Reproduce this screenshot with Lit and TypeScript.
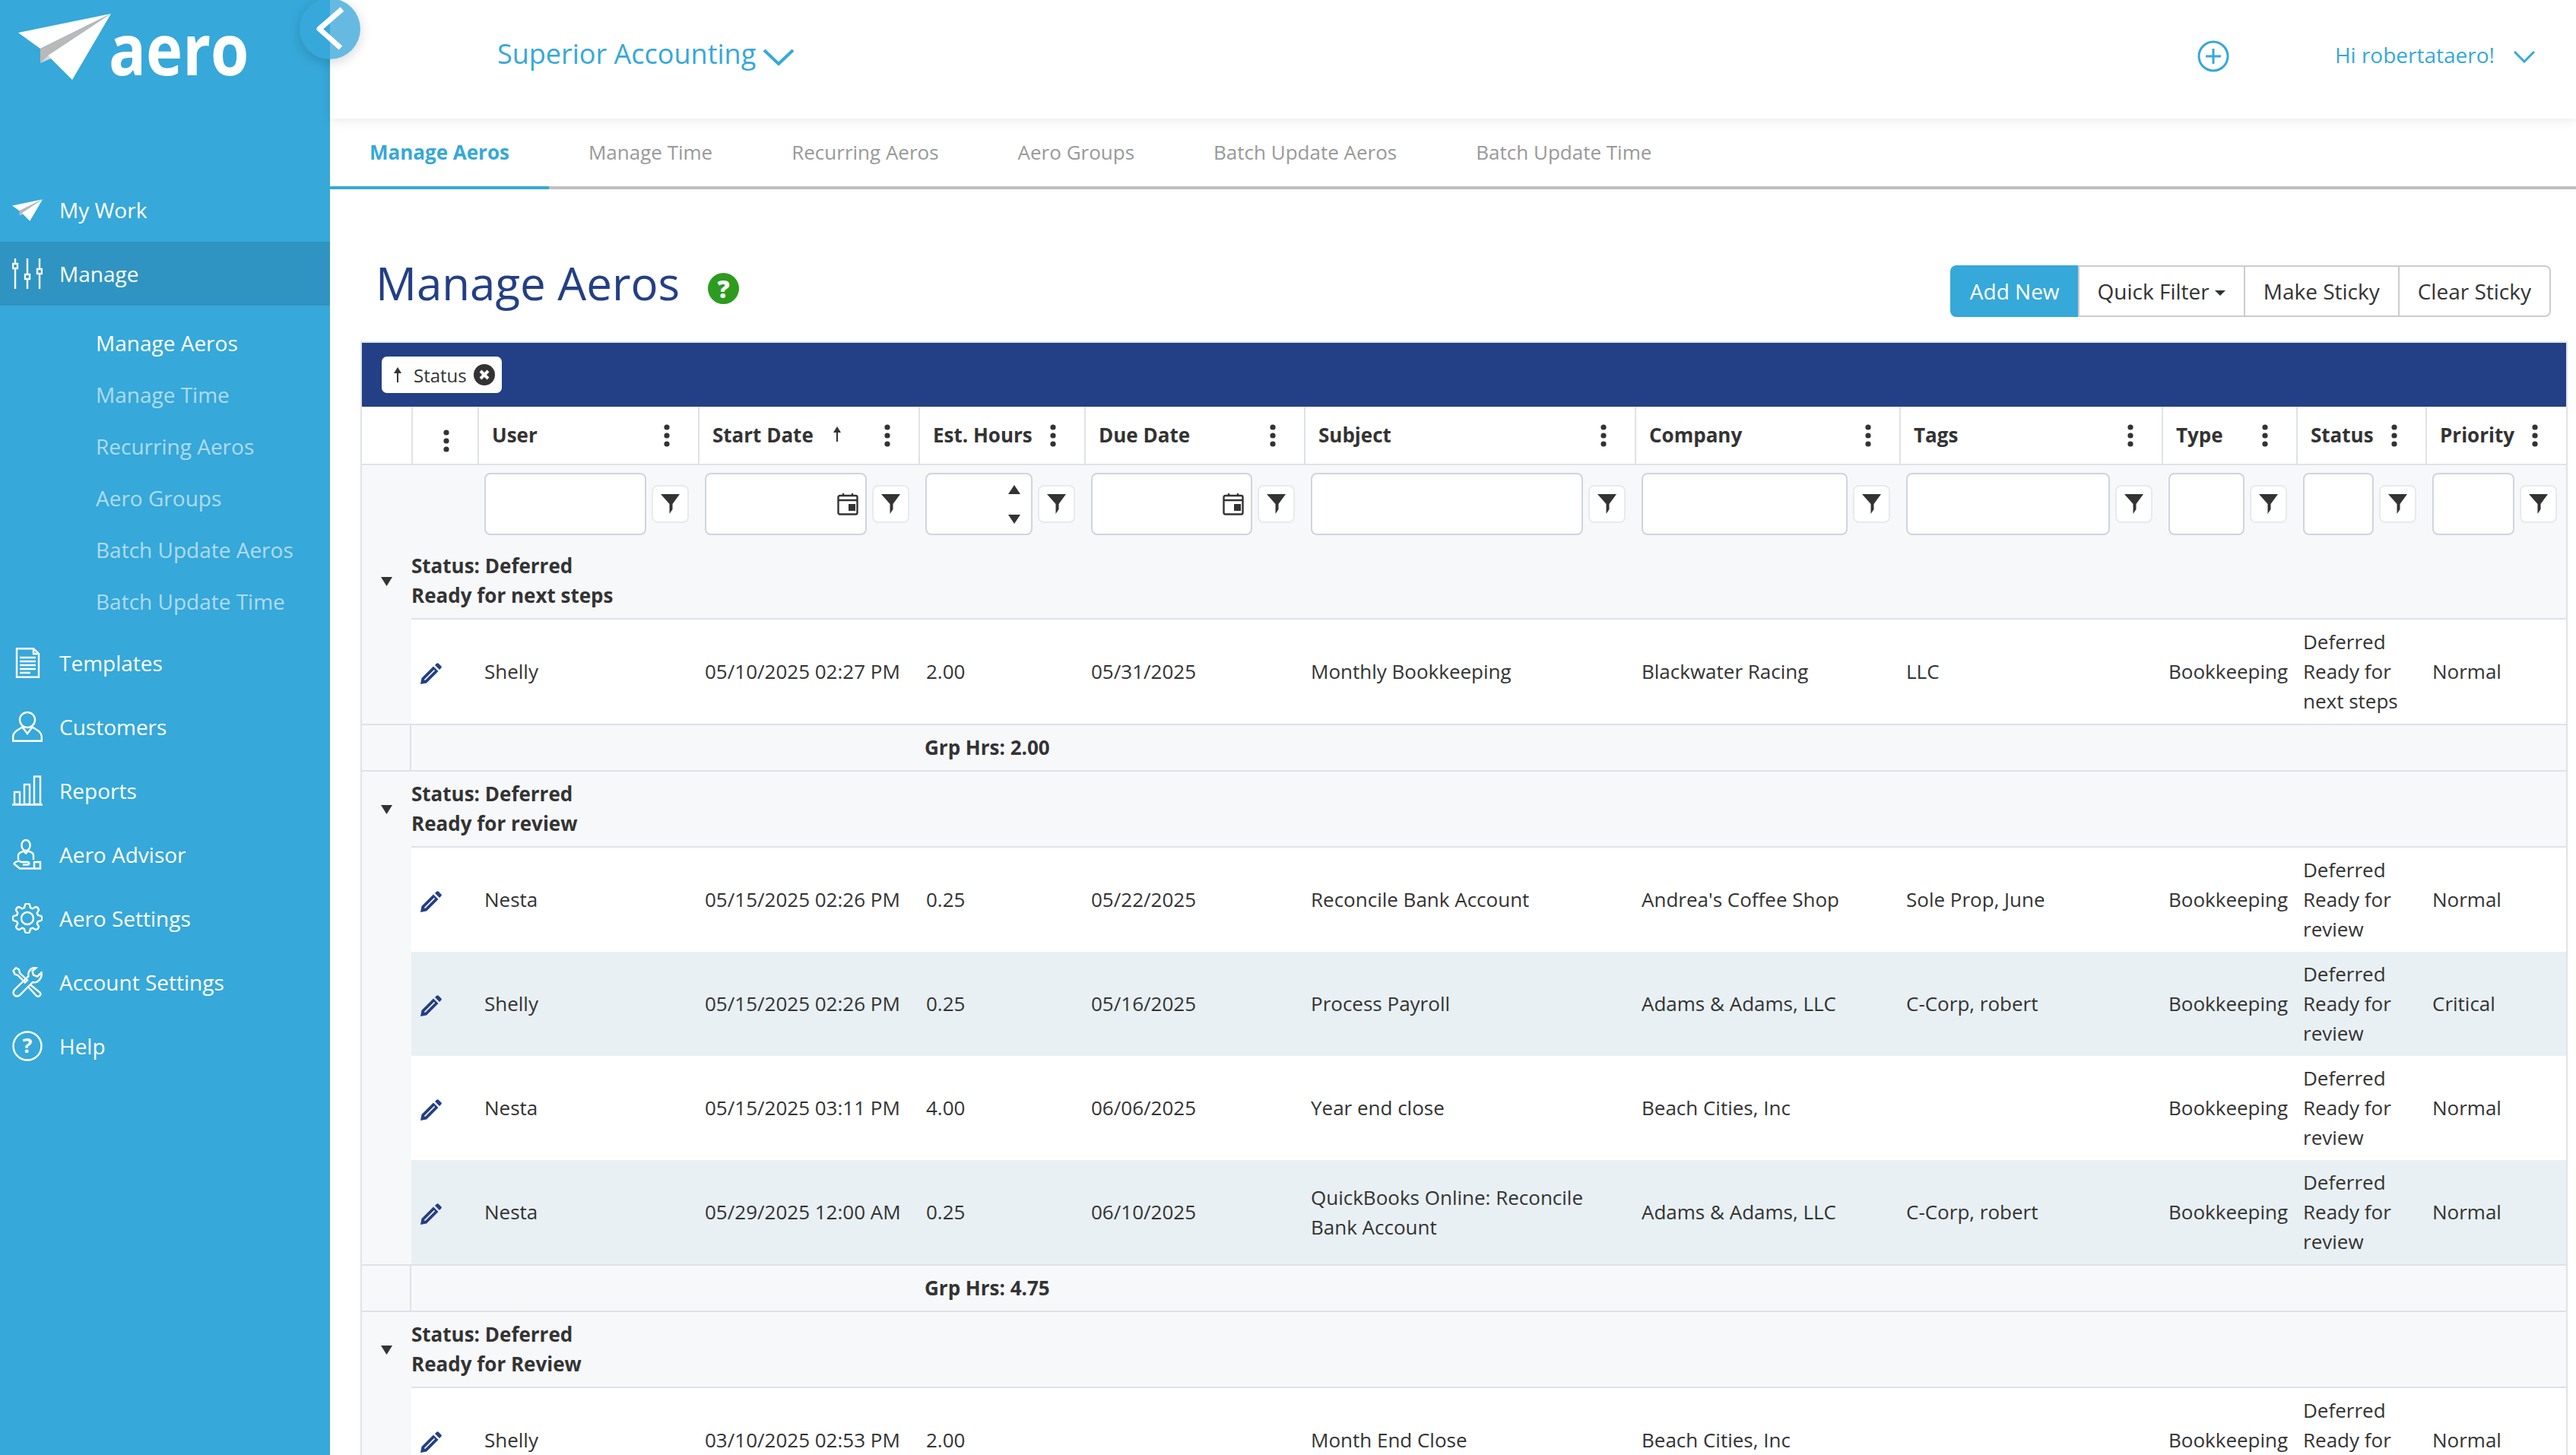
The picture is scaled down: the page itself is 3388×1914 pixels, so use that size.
import { LitElement, html, css, svg } from "lit";
import { customElement } from "lit/decorators.js";

const PLANE = svg`
  <polygon fill="#fff" points="146,18 24,43 53,64" />
  <polygon fill="#b9b9b9" points="146,18 53,64 53,83 63,73" />
  <polygon fill="#d8d8d8" points="53,83 63,73 67,77" />
  <polygon fill="#fff" points="146,18 63,73 95,105" />`;

function gearPath(): string {
  const teeth = 8;
  const pts: string[] = [];
  for (let i = 0; i < teeth; i++) {
    const a = (i / teeth) * Math.PI * 2;
    const step = (Math.PI * 2) / teeth;
    const p = (r: number, t: number) =>
      `${(20 + r * Math.cos(t)).toFixed(2)} ${(20 + r * Math.sin(t)).toFixed(2)}`;
    pts.push(`${i === 0 ? "M" : "L"}${p(14.5, a - step * 0.36)}`);
    pts.push(`L${p(18.5, a - step * 0.2)}`);
    pts.push(`Q${p(20.5, a)} ${p(18.5, a + step * 0.2)}`);
    pts.push(`L${p(14.5, a + step * 0.36)}`);
  }
  return pts.join(" ") + " Z";
}

const ICONS: Record<string, unknown> = {
  plane: svg`<svg class="ico planeico" viewBox="24 18 122 87">${PLANE}</svg>`,
  sliders: svg`<svg class="ico line" viewBox="0 0 40 40">
    <path d="M4 0V40M20 0V40M36 0V40" />
    <rect x="1" y="7" width="6" height="6" fill="#2f94c2" />
    <rect x="17" y="21" width="6" height="6" fill="#2f94c2" />
    <rect x="33" y="14" width="6" height="6" fill="#2f94c2" />
  </svg>`,
  doc: svg`<svg class="ico line" viewBox="0 0 40 40">
    <path d="M6 1.2H28L35 8V38.8H6Z M28 1.2V8H35" />
    <path d="M10 13H31M10 18H31M10 23H31M10 28H31M10 33H24" />
  </svg>`,
  person: svg`<svg class="ico line" viewBox="0 0 40 40">
    <circle cx="20" cy="11" r="10" />
    <path d="M1.2 38.8V33C1.2 27 8 24 13.5 20.5L20 29L26.5 20.5C32 24 38.8 27 38.8 33V38.8Z" />
  </svg>`,
  bars: svg`<svg class="ico line" viewBox="0 0 40 40">
    <path d="M0 38.5H40" />
    <rect x="3" y="22" width="7" height="16" />
    <rect x="16" y="12" width="7" height="26" />
    <rect x="29" y="1.5" width="8" height="36.5" />
  </svg>`,
  advisor: svg`<svg class="ico line" viewBox="0 0 40 40">
    <ellipse cx="18" cy="8" rx="5.6" ry="7" />
    <path d="M8 27V21C8 18 12 17 15 15.5L18 18.5L21 15.5C25 17 28 18 28 21V27" />
    <path d="M2 32C5 29 9 28 12 30H20C23 30 23 33.5 20 33.5H14M2 32L10 38.5H37V30H29V38.5" />
  </svg>`,
  gear: svg`<svg class="ico line" viewBox="0 0 40 40">
    <path d="${gearPath()}" stroke-linejoin="round" />
    <circle cx="20" cy="20" r="8" />
  </svg>`,
  tools: svg`<svg class="ico line" viewBox="0 0 40 40">
    <path d="M1.5 5L5 1.2L9 3.5L10 8L20 17.5L17 20.5L7.5 11L3.5 9.5Z" />
    <path d="M23.5 23L36.5 33.5C39 37 35 40 32 38L21 26" />
    <path d="M38.5 7.5L33 12.5L28 10.5L26.5 5.5L31.5 1.2C25 0 20 6 21.5 12L3 30C-1 36 5 41 10 37L27 20C33 22 40 15 38.5 7.5Z" />
  </svg>`,
  help: svg`<svg class="ico line" viewBox="0 0 40 40">
    <circle cx="20" cy="20" r="18.5" />
    <text x="20" y="29" text-anchor="middle" class="q">?</text>
  </svg>`,
};

const FUNNEL = svg`<svg class="funnel" viewBox="0 0 25 26"><path d="M0 0H25L15.5 13V20L11.5 26V13Z" /></svg>`;
const CAL = svg`<svg class="cal" viewBox="0 0 28 30">
  <rect x="1.5" y="4" width="25" height="24.5" rx="2" /><path d="M1.5 10H26.5M8 1V5M20 1V5" />
  <rect x="15" y="15" width="9" height="9" class="solid" />
</svg>`;
const PENCIL = svg`<svg class="pencil" viewBox="0 0 28 28">
  <path d="M0 28L1.5 20L17 4.5L23.5 11L8 26.5Z" />
  <path d="M5.5 22.5L18.5 9.5" class="slit" />
  <path d="M19 3L21 1A2 2 0 0 1 24 1L27 4A2 2 0 0 1 27 7L25 9Z" />
</svg>`;

interface Row {
  user: string;
  start: string;
  est: string;
  due: string;
  subject: string;
  company: string;
  tags: string;
  status: string;
  priority: string;
}
interface Group {
  title: string;
  rows: Row[];
  total?: string;
}

const GROUPS: Group[] = [
  {
    title: "Ready for next steps",
    total: "Grp Hrs: 2.00",
    rows: [
      {
        user: "Shelly",
        start: "05/10/2025 02:27 PM",
        est: "2.00",
        due: "05/31/2025",
        subject: "Monthly Bookkeeping",
        company: "Blackwater Racing",
        tags: "LLC",
        status: "Ready for next steps",
        priority: "Normal",
      },
    ],
  },
  {
    title: "Ready for review",
    total: "Grp Hrs: 4.75",
    rows: [
      {
        user: "Nesta",
        start: "05/15/2025 02:26 PM",
        est: "0.25",
        due: "05/22/2025",
        subject: "Reconcile Bank Account",
        company: "Andrea's Coffee Shop",
        tags: "Sole Prop, June",
        status: "Ready for review",
        priority: "Normal",
      },
      {
        user: "Shelly",
        start: "05/15/2025 02:26 PM",
        est: "0.25",
        due: "05/16/2025",
        subject: "Process Payroll",
        company: "Adams & Adams, LLC",
        tags: "C-Corp, robert",
        status: "Ready for review",
        priority: "Critical",
      },
      {
        user: "Nesta",
        start: "05/15/2025 03:11 PM",
        est: "4.00",
        due: "06/06/2025",
        subject: "Year end close",
        company: "Beach Cities, Inc",
        tags: "",
        status: "Ready for review",
        priority: "Normal",
      },
      {
        user: "Nesta",
        start: "05/29/2025 12:00 AM",
        est: "0.25",
        due: "06/10/2025",
        subject: "QuickBooks Online: Reconcile Bank Account",
        company: "Adams & Adams, LLC",
        tags: "C-Corp, robert",
        status: "Ready for review",
        priority: "Normal",
      },
    ],
  },
  {
    title: "Ready for Review",
    rows: [
      {
        user: "Shelly",
        start: "03/10/2025 02:53 PM",
        est: "2.00",
        due: "",
        subject: "Month End Close",
        company: "Beach Cities, Inc",
        tags: "",
        status: "Ready for Review",
        priority: "Normal",
      },
    ],
  },
];

const COLS = [
  { label: "User", kind: "" },
  { label: "Start Date", kind: "date", sort: true },
  { label: "Est. Hours", kind: "num" },
  { label: "Due Date", kind: "date" },
  { label: "Subject", kind: "" },
  { label: "Company", kind: "" },
  { label: "Tags", kind: "" },
  { label: "Type", kind: "" },
  { label: "Status", kind: "" },
  { label: "Priority", kind: "" },
];

const NAV_TOP = [
  { icon: "plane", label: "My Work" },
  { icon: "sliders", label: "Manage", active: true },
];
const SUB = ["Manage Aeros", "Manage Time", "Recurring Aeros", "Aero Groups", "Batch Update Aeros", "Batch Update Time"];
const NAV_BOTTOM = [
  { icon: "doc", label: "Templates" },
  { icon: "person", label: "Customers" },
  { icon: "bars", label: "Reports" },
  { icon: "advisor", label: "Aero Advisor" },
  { icon: "gear", label: "Aero Settings" },
  { icon: "tools", label: "Account Settings" },
  { icon: "help", label: "Help" },
];

@customElement("app-root")
export class AppRoot extends LitElement {
  static styles = css`
    :host {
      display: block;
      position: relative;
      width: 3388px;
      height: 1914px;
      overflow: hidden;
      font-family: "Open Sans", "Liberation Sans", sans-serif;
      font-size: 26px;
      line-height: 39px;
      color: #333;
      background: #fff;
    }
    .app { display: flex; height: 100%; }

    /* sidebar */
    .side { width: 434px; flex: none; background: #36a8d9; color: #fff; font-size: 28px; }
    .logo { height: 234px; display: flex; align-items: flex-start; }
    .logo svg { width: 150px; height: 110px; flex: none; display: block; }
    .logo span {
      margin: 8px 0 0 -7px;
      font-size: 94px;
      line-height: 110px;
      font-weight: 700;
      transform: scaleX(0.865);
      transform-origin: left center;
    }
    .nav { height: 84px; display: flex; align-items: center; gap: 22px; padding-left: 16px; }
    .nav.on { background: #2f94c2; }
    .ico { width: 40px; height: 40px; flex: none; display: block; fill: #fff; }
    .ico.planeico { height: 29px; }
    .ico.line { fill: none; stroke: #fff; stroke-width: 2.4; }
    .ico .q { fill: #fff; stroke: none; font-size: 27px; font-weight: 700; font-family: "Open Sans", sans-serif; }
    .subnav { padding: 15px 0 5px; }
    .sub { height: 68px; display: flex; align-items: center; padding-left: 126px; color: rgba(255, 255, 255, 0.62); }
    .sub.on { color: #fff; }

    /* collapse button */
    .collapse {
      position: absolute;
      left: 394px;
      top: -2px;
      width: 80px;
      height: 80px;
      border-radius: 50%;
      background: linear-gradient(90deg, #36a8d9 50%, #66bae1 50%);
      box-shadow: 0 4px 16px rgba(0, 0, 0, 0.16);
    }
    .collapse svg { display: block; width: 80px; height: 80px; fill: none; stroke: #fff; stroke-width: 7; stroke-linejoin: round; }

    /* main */
    .main { flex: 1; min-width: 0; display: flex; flex-direction: column; }
    .top {
      height: 156px;
      flex: none;
      display: flex;
      align-items: center;
      padding: 0 54px 12px 220px;
      box-sizing: border-box;
      color: #36a8d9;
      box-shadow: 0 2px 14px rgba(0, 0, 0, 0.09);
      position: relative;
    }
    .company { font-size: 36px; line-height: 50px; margin-top: -2px; }
    .chev { fill: none; stroke: #36a8d9; stroke-width: 4; flex: none; }
    .chev.big { width: 42px; height: 24px; margin: 6px 0 0 9px; }
    .chev.small { width: 28px; height: 16px; margin: 6px 0 0 25px; stroke-width: 3; }
    .add { width: 42px; height: 42px; margin: 3px 0 0 auto; fill: none; stroke: #36a8d9; stroke-width: 3; flex: none; }
    .hi { font-size: 28px; margin-left: 139px; }

    .tabs { height: 93px; flex: none; display: flex; box-sizing: border-box; border-bottom: 4px solid #bfbfbf; color: #999; }
    .tab { height: 93px; box-sizing: border-box; padding: 25px 52px 0; white-space: nowrap; }
    .tab.on { color: #36a8d9; font-weight: 700; border-bottom: 4px solid #36a8d9; }

    .head { height: 200px; flex: none; display: flex; box-sizing: border-box; padding: 89px 33px 0 60px; }
    h1 { margin: 0; font-size: 60px; line-height: 68px; font-weight: 400; color: #233f85; }
    .qm {
      width: 41px;
      height: 41px;
      border-radius: 50%;
      background: #2d9b1f;
      color: #fff;
      margin: 21px 0 0 37px;
      font-size: 32px;
      line-height: 41px;
      font-weight: 800;
      text-align: center;
      flex: none;
    }
    .btns { margin: 11px 0 0 auto; display: flex; font-size: 28px; line-height: 40px; height: 68px; }
    .btn {
      box-sizing: border-box;
      padding: 12px 24px;
      border: 2px solid #ccc;
      margin-left: -2px;
      white-space: nowrap;
      display: flex;
      align-items: center;
    }
    .btn.primary { background: #36a8d9; border-color: #36a8d9; color: #fff; border-radius: 8px 0 0 8px; margin-left: 0; }
    .btn:last-child { border-radius: 0 8px 8px 0; }
    .caret { width: 0; height: 0; margin: 4px 0 0 7px; border: 7px solid transparent; border-top-color: #333; border-bottom: 0; }

    /* grid */
    .grid { margin: 0 11px 0 40px; border: 2px solid #dfe2e7; border-bottom: 0; background: #f7f8fa; flex: 1; min-height: 0; overflow: hidden; }
    .bar { height: 84px; background: #233f85; display: flex; align-items: center; padding-left: 26px; }
    .chip {
      height: 48px;
      box-sizing: border-box;
      background: #fff;
      border-radius: 7px;
      display: flex;
      align-items: center;
      padding: 0 9px 0 14px;
      font-size: 24px;
      gap: 9px;
    }
    .chip .arr { margin-right: 5px; }
    .arr { width: 14px; height: 22px; fill: #333; flex: none; }
    .x { width: 28px; height: 28px; flex: none; }
    .cols {
      display: grid;
      grid-template-columns: 65px 87px 290px 290px 218px 289px 435px 348px 345px 177px 170px 185px;
    }
    .hrow { height: 77px; box-sizing: border-box; background: #fff; border-bottom: 2px solid #dfe2e7; }
    .hcell {
      border-left: 2px solid #dfe2e7;
      display: flex;
      align-items: center;
      padding-left: 17px;
      font-weight: 700;
      position: relative;
      min-width: 0;
    }
    .hcell:first-child { border-left: 0; }
    .hcell .arr { margin-left: 24px; margin-top: -3px; }
    .keb { width: 8px; height: 30px; margin-left: auto; margin-right: 37px; flex: none; fill: #333; }
    .hcell.m .keb { margin: 14px 37px 0 auto; }
    .frow { height: 103px; }
    .fcell { padding: 10px 12px 0 9px; display: flex; align-items: center; gap: 7px; height: 82px; min-width: 0; }
    .input {
      flex: 1;
      min-width: 0;
      height: 82px;
      box-sizing: border-box;
      background: #fff;
      border: 2px solid #d0d4dc;
      border-radius: 8px;
      display: flex;
      align-items: center;
      justify-content: flex-end;
      padding-right: 9px;
    }
    .input.num { padding-right: 14px; }
    .spin { display: flex; flex-direction: column; gap: 27px; }
    .spin svg { width: 16px; height: 12px; fill: #333; display: block; }
    .cal { width: 28px; height: 30px; fill: none; stroke: #333; stroke-width: 2.4; }
    .cal .solid { fill: #333; stroke: none; }
    .fbtn {
      width: 49px;
      height: 50px;
      box-sizing: border-box;
      flex: none;
      background: #fff;
      border: 2px solid #e8eaee;
      border-radius: 8px;
      display: flex;
      align-items: center;
      justify-content: center;
    }
    .funnel { width: 25px; height: 26px; fill: #333; }
    .ghead { display: flex; }
    .gtog { width: 65px; flex: none; display: flex; align-items: center; justify-content: center; }
    .gtog svg { width: 15px; height: 12px; fill: #333; }
    .gtext { flex: 1; padding: 10px 0; border-bottom: 2px solid #dfe2e7; font-weight: 700; }
    .ghead .gtext div { height: 39px; }
    .dgroup { display: flex; }
    .gutter { width: 65px; flex: none; }
    .rows { flex: 1; min-width: 0; }
    .row { height: 137px; background: #fff; grid-template-columns: 87px 290px 290px 218px 289px 435px 348px 345px 177px 170px 185px; }
    .row.alt { background: #e9f0f3; }
    .cell { padding: 0 8px 0 9px; display: flex; align-items: center; min-width: 0; }
    .cell.est { padding-left: 10px; }
    .cell .txt { display: block; }
    .pencil { width: 28px; height: 28px; fill: #233f85; margin-left: 3px; margin-top: 4px; }
    .pencil .slit { stroke: #fff; stroke-width: 1.7; fill: none; }
    .gfoot { height: 63px; box-sizing: border-box; border-top: 2px solid #dfe2e7; border-bottom: 2px solid #dfe2e7; font-weight: 700; }
    .gfoot > div { display: flex; align-items: center; white-space: nowrap; min-width: 0; }
    .gfoot .first { border-right: 2px solid #dfe2e7; }
    .gfoot .lab { grid-column: 5 / span 2; padding-left: 8px; }
  `;

  private kebab() {
    return svg`<svg class="keb" viewBox="0 0 8 30"><circle cx="4" cy="4" r="3.6" /><circle cx="4" cy="15" r="3.6" /><circle cx="4" cy="26" r="3.6" /></svg>`;
  }

  private arrow() {
    return svg`<svg class="arr" viewBox="0 0 14 22"><path d="M7 1L12 9H8V21H6V9H2Z" /></svg>`;
  }

  private renderNav(n: { icon: string; label: string; active?: boolean }) {
    return html`<div class="nav ${n.active ? "on" : ""}">${ICONS[n.icon]}<span>${n.label}</span></div>`;
  }

  private renderFilter(c: { kind: string }) {
    return html`<div class="fcell">
      <div class="input ${c.kind === "num" ? "num" : ""}">
        ${c.kind === "date" ? CAL : ""}
        ${c.kind === "num"
          ? html`<div class="spin">
              <svg viewBox="0 0 16 12"><path d="M8 0L16 12H0Z" /></svg>
              <svg viewBox="0 0 16 12"><path d="M0 0H16L8 12Z" /></svg>
            </div>`
          : ""}
      </div>
      <div class="fbtn">${FUNNEL}</div>
    </div>`;
  }

  private renderRow(r: Row, i: number) {
    return html`<div class="cols row ${i % 2 ? "alt" : ""}">
      <div class="cell">${PENCIL}</div>
      <div class="cell"><span class="txt">${r.user}</span></div>
      <div class="cell"><span class="txt">${r.start}</span></div>
      <div class="cell est"><span class="txt">${r.est}</span></div>
      <div class="cell"><span class="txt">${r.due}</span></div>
      <div class="cell"><span class="txt">${r.subject}</span></div>
      <div class="cell"><span class="txt">${r.company}</span></div>
      <div class="cell"><span class="txt">${r.tags}</span></div>
      <div class="cell"><span class="txt">Bookkeeping</span></div>
      <div class="cell"><span class="txt">Deferred<br />${r.status}</span></div>
      <div class="cell"><span class="txt">${r.priority}</span></div>
    </div>`;
  }

  private renderGroup(g: Group) {
    return html`
      <div class="ghead">
        <div class="gtog"><svg viewBox="0 0 15 12"><path d="M0 0H15L7.5 12Z" /></svg></div>
        <div class="gtext"><div>Status: Deferred</div><div>${g.title}</div></div>
      </div>
      <div class="dgroup">
        <div class="gutter"></div>
        <div class="rows">${g.rows.map((r, i) => this.renderRow(r, i))}</div>
      </div>
      ${g.total
        ? html`<div class="cols gfoot"><div class="first"></div><div class="lab">${g.total}</div></div>`
        : ""}
    `;
  }

  render() {
    return html`
      <div class="app">
        <aside class="side">
          <div class="logo">
            <svg viewBox="0 0 150 110">${PLANE}</svg>
            <span>aero</span>
          </div>
          ${NAV_TOP.map((n) => this.renderNav(n))}
          <div class="subnav">
            ${SUB.map((s, i) => html`<div class="sub ${i === 0 ? "on" : ""}">${s}</div>`)}
          </div>
          ${NAV_BOTTOM.map((n) => this.renderNav(n))}
        </aside>
        <div class="main">
          <header class="top">
            <span class="company">Superior Accounting</span>
            <svg class="chev big" viewBox="0 0 42 24"><path d="M2 3L21 21L40 3" /></svg>
            <svg class="add" viewBox="0 0 42 42"><circle cx="21" cy="21" r="19" /><path d="M21 11V31M11 21H31" /></svg>
            <span class="hi">Hi robertataero!</span>
            <svg class="chev small" viewBox="0 0 28 16"><path d="M1 1L14 14L27 1" /></svg>
          </header>
          <nav class="tabs">
            ${["Manage Aeros", "Manage Time", "Recurring Aeros", "Aero Groups", "Batch Update Aeros", "Batch Update Time"].map(
              (t, i) => html`<div class="tab ${i === 0 ? "on" : ""}">${t}</div>`
            )}
          </nav>
          <div class="head">
            <h1>Manage Aeros</h1>
            <div class="qm">?</div>
            <div class="btns">
              <div class="btn primary">Add New</div>
              <div class="btn">Quick Filter<span class="caret"></span></div>
              <div class="btn">Make Sticky</div>
              <div class="btn">Clear Sticky</div>
            </div>
          </div>
          <section class="grid">
            <div class="bar">
              <div class="chip">
                ${this.arrow()}
                <span>Status</span>
                <svg class="x" viewBox="0 0 28 28">
                  <circle cx="14" cy="14" r="14" fill="#333" />
                  <path d="M9 9L19 19M19 9L9 19" stroke="#fff" stroke-width="4" />
                </svg>
              </div>
            </div>
            <div class="cols hrow">
              <div class="hcell"></div>
              <div class="hcell m">${this.kebab()}</div>
              ${COLS.map(
                (c) => html`<div class="hcell">
                  <span>${c.label}</span>
                  ${c.sort ? this.arrow() : ""}
                  ${this.kebab()}
                </div>`
              )}
            </div>
            <div class="cols frow">
              <div></div>
              <div></div>
              ${COLS.map((c) => this.renderFilter(c))}
            </div>
            ${GROUPS.map((g) => this.renderGroup(g))}
          </section>
        </div>
      </div>
      <div class="collapse">
        <svg viewBox="0 0 80 80"><path d="M56 14L26 40L54 65" /></svg>
      </div>
    `;
  }
}
